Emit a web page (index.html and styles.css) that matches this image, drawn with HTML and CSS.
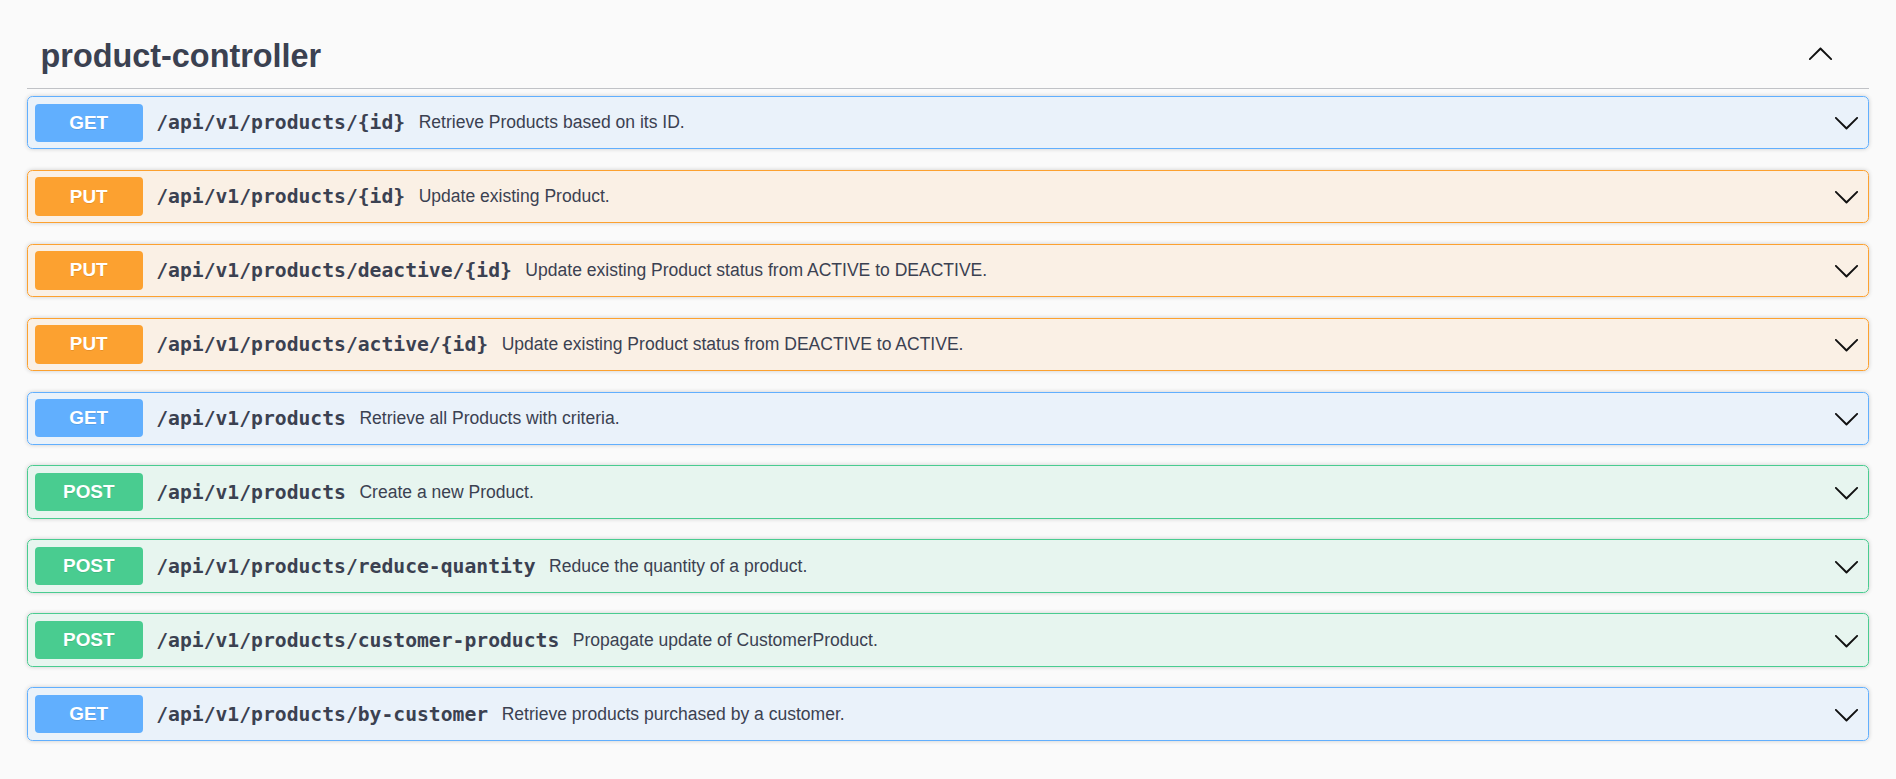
FILE: index.html
```html
<!DOCTYPE html>
<html lang="en">
<head>
<meta charset="utf-8">
<title>product-controller</title>
<link rel="stylesheet" href="styles.css">
</head>
<body>
<div class="wrapper">
  <section class="tag-section">
    <h3 class="tag">
      <span class="tag-title">product-controller</span>
      <button class="tag-toggle" aria-label="Collapse operation">
        <svg class="arrow" viewBox="0 0 20 20" width="27" height="27"><path d="M17.418 13.891c.272.268.709.268.979 0s.271-.701 0-.969l-7.908-7.830c-.27-.268-.707-.268-.979 0l-7.908 7.830c-.27.268-.27.701 0 .969.271.268.709.268.979 0L10 6.75l7.418 7.141z"/></svg>
      </button>
    </h3>
    <div class="ops">
      <div class="opblock get">
        <div class="summary">
          <span class="method">GET</span>
          <span class="path">/api/v1/products/{id}</span>
          <span class="desc">Retrieve Products based on its ID.</span>
          <svg class="arrow" viewBox="0 0 20 20" width="27" height="27"><path d="M17.418 6.109c.272-.268.709-.268.979 0s.271.701 0 .969l-7.908 7.83c-.27.268-.707.268-.979 0l-7.908-7.83c-.27-.268-.27-.701 0-.969.271-.268.709-.268.979 0L10 13.25l7.418-7.141z"/></svg>
        </div>
      </div>
      <div class="opblock put">
        <div class="summary">
          <span class="method">PUT</span>
          <span class="path">/api/v1/products/{id}</span>
          <span class="desc">Update existing Product.</span>
          <svg class="arrow" viewBox="0 0 20 20" width="27" height="27"><path d="M17.418 6.109c.272-.268.709-.268.979 0s.271.701 0 .969l-7.908 7.83c-.27.268-.707.268-.979 0l-7.908-7.83c-.27-.268-.27-.701 0-.969.271-.268.709-.268.979 0L10 13.25l7.418-7.141z"/></svg>
        </div>
      </div>
      <div class="opblock put">
        <div class="summary">
          <span class="method">PUT</span>
          <span class="path">/api/v1/products/deactive/{id}</span>
          <span class="desc">Update existing Product status from ACTIVE to DEACTIVE.</span>
          <svg class="arrow" viewBox="0 0 20 20" width="27" height="27"><path d="M17.418 6.109c.272-.268.709-.268.979 0s.271.701 0 .969l-7.908 7.83c-.27.268-.707.268-.979 0l-7.908-7.83c-.27-.268-.27-.701 0-.969.271-.268.709-.268.979 0L10 13.25l7.418-7.141z"/></svg>
        </div>
      </div>
      <div class="opblock put">
        <div class="summary">
          <span class="method">PUT</span>
          <span class="path">/api/v1/products/active/{id}</span>
          <span class="desc">Update existing Product status from DEACTIVE to ACTIVE.</span>
          <svg class="arrow" viewBox="0 0 20 20" width="27" height="27"><path d="M17.418 6.109c.272-.268.709-.268.979 0s.271.701 0 .969l-7.908 7.83c-.27.268-.707.268-.979 0l-7.908-7.83c-.27-.268-.27-.701 0-.969.271-.268.709-.268.979 0L10 13.25l7.418-7.141z"/></svg>
        </div>
      </div>
      <div class="opblock get">
        <div class="summary">
          <span class="method">GET</span>
          <span class="path">/api/v1/products</span>
          <span class="desc">Retrieve all Products with criteria.</span>
          <svg class="arrow" viewBox="0 0 20 20" width="27" height="27"><path d="M17.418 6.109c.272-.268.709-.268.979 0s.271.701 0 .969l-7.908 7.83c-.27.268-.707.268-.979 0l-7.908-7.83c-.27-.268-.27-.701 0-.969.271-.268.709-.268.979 0L10 13.25l7.418-7.141z"/></svg>
        </div>
      </div>
      <div class="opblock post">
        <div class="summary">
          <span class="method">POST</span>
          <span class="path">/api/v1/products</span>
          <span class="desc">Create a new Product.</span>
          <svg class="arrow" viewBox="0 0 20 20" width="27" height="27"><path d="M17.418 6.109c.272-.268.709-.268.979 0s.271.701 0 .969l-7.908 7.83c-.27.268-.707.268-.979 0l-7.908-7.83c-.27-.268-.27-.701 0-.969.271-.268.709-.268.979 0L10 13.25l7.418-7.141z"/></svg>
        </div>
      </div>
      <div class="opblock post">
        <div class="summary">
          <span class="method">POST</span>
          <span class="path">/api/v1/products/reduce-quantity</span>
          <span class="desc">Reduce the quantity of a product.</span>
          <svg class="arrow" viewBox="0 0 20 20" width="27" height="27"><path d="M17.418 6.109c.272-.268.709-.268.979 0s.271.701 0 .969l-7.908 7.83c-.27.268-.707.268-.979 0l-7.908-7.83c-.27-.268-.27-.701 0-.969.271-.268.709-.268.979 0L10 13.25l7.418-7.141z"/></svg>
        </div>
      </div>
      <div class="opblock post">
        <div class="summary">
          <span class="method">POST</span>
          <span class="path">/api/v1/products/customer-products</span>
          <span class="desc">Propagate update of CustomerProduct.</span>
          <svg class="arrow" viewBox="0 0 20 20" width="27" height="27"><path d="M17.418 6.109c.272-.268.709-.268.979 0s.271.701 0 .969l-7.908 7.83c-.27.268-.707.268-.979 0l-7.908-7.83c-.27-.268-.27-.701 0-.969.271-.268.709-.268.979 0L10 13.25l7.418-7.141z"/></svg>
        </div>
      </div>
      <div class="opblock get">
        <div class="summary">
          <span class="method">GET</span>
          <span class="path">/api/v1/products/by-customer</span>
          <span class="desc">Retrieve products purchased by a customer.</span>
          <svg class="arrow" viewBox="0 0 20 20" width="27" height="27"><path d="M17.418 6.109c.272-.268.709-.268.979 0s.271.701 0 .969l-7.908 7.83c-.27.268-.707.268-.979 0l-7.908-7.83c-.27-.268-.27-.701 0-.969.271-.268.709-.268.979 0L10 13.25l7.418-7.141z"/></svg>
        </div>
      </div>
    </div>
  </section>
</div>
</body>
</html>
```

FILE: styles.css
```css
html, body {
  margin: 0;
  padding: 0;
  background: #fafafa;
}

body {
  font-family: "Liberation Sans", Arial, sans-serif;
  color: #3b4151;
}

.wrapper {
  padding: 24px 27px 0 27px;
}

.tag {
  display: flex;
  align-items: center;
  margin: 0 0 6.75px 0;
  padding: 13.5px 27px 13.5px 13.5px;
  border-bottom: 1px solid rgba(59, 65, 81, 0.3);
  font-size: 32.4px;
  font-weight: 700;
  line-height: normal;
}

.tag-title {
  flex: 1 1 auto;
  color: #3b4151;
}

.tag-toggle {
  display: flex;
  align-items: center;
  border: none;
  background: none;
  padding: 0;
  margin: -4px 8.3px 0 0;
  cursor: pointer;
}

.arrow {
  display: block;
  fill: #111;
  flex: 0 0 auto;
}

.opblock {
  border: 1px solid;
  border-radius: 5.4px;
  box-shadow: 0 0 4px rgba(0, 0, 0, 0.19);
  margin: 0 0 20.25px 0;
}

.summary {
  display: flex;
  align-items: center;
  padding: 6.75px;
}

.method {
  min-width: 108px;
  padding: 8.1px 0;
  font-size: 18.9px;
  font-weight: 700;
  line-height: normal;
  text-align: center;
  color: #fff;
  border-radius: 4px;
  text-shadow: 0 1.35px 0 rgba(0, 0, 0, 0.1);
}

.path {
  padding: 0 13.5px;
  font-family: "DejaVu Sans Mono", "Liberation Mono", monospace;
  font-size: 19.7px;
  font-weight: 700;
  color: #3b4151;
}

.desc {
  flex: 1 1 auto;
  font-size: 17.55px;
  color: #3b4151;
}

.summary .arrow {
  margin-right: 1.3px;
}

.get {
  border-color: #61affe;
  background: rgba(97, 175, 254, 0.1);
}
.get .method {
  background: #61affe;
}

.put {
  border-color: #fca130;
  background: rgba(252, 161, 48, 0.1);
}
.put .method {
  background: #fca130;
}

.post {
  border-color: #49cc90;
  background: rgba(73, 204, 144, 0.1);
}
.post .method {
  background: #49cc90;
}
```
